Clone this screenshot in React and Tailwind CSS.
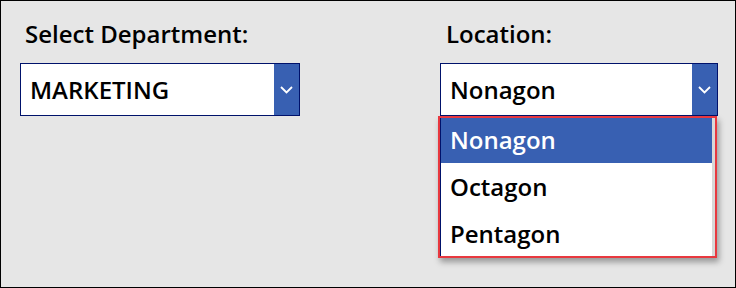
import React from "react";

function Chevron() {
  return (
    <svg width="13" height="8" viewBox="0 0 13 8" fill="none">
      <path d="M1 1l5.5 5.5L12 1" stroke="white" strokeWidth="1.8" />
    </svg>
  );
}

function Dropdown({ value, width }) {
  return (
    <div className={`flex h-[53px] border border-[#00126b] bg-white ${width}`}>
      <div className="flex flex-1 items-center pl-[9px] text-[24px] font-semibold leading-none text-black">
        {value}
      </div>
      <div className="flex w-[25px] items-center justify-center bg-[#3860b2]">
        <Chevron />
      </div>
    </div>
  );
}

const options = ["Nonagon", "Octagon", "Pentagon"];

export default function App() {
  return (
    <div className="relative flex h-[288px] w-[736px] border border-black bg-[#e6e6e6] pl-[19px] font-['Open_Sans',sans-serif]">
      {/* Department */}
      <div className="w-[280px]">
        <div className="h-[62px] pl-[5px] pt-[18px] text-[24px] font-semibold leading-[30px] text-black">
          Select Department:
        </div>
        <Dropdown value="MARKETING" width="w-[280px]" />
      </div>

      {/* Location */}
      <div className="ml-[140px] w-[278px]">
        <div className="h-[62px] pl-[6px] pt-[18px] text-[24px] font-semibold leading-[30px] text-black">
          Location:
        </div>
        <Dropdown value="Nonagon" width="w-[278px]" />
      </div>

      {/* open list */}
      <div className="absolute left-[437px] top-[115px] h-[142px] w-[279px] bg-white px-[2px] shadow-[2px_4px_6px_rgba(0,0,0,0.35)]">
        <div className="border-l border-r-[3px] border-l-[#00126b] border-r-[#d8d8d8]">
          {options.map((o, i) => (
            <div
              key={o}
              className={`flex h-[47px] items-center pl-[9px] text-[24px] font-semibold leading-none ${
                i === 0 ? "bg-[#3860b2] text-white" : "text-black"
              }`}
            >
              {o}
            </div>
          ))}
        </div>
        <div className="pointer-events-none absolute inset-0 border-2 border-[#e8383f]" />
      </div>
    </div>
  );
}
